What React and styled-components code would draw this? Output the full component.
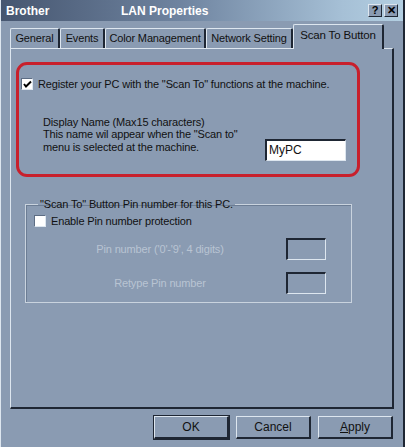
import styled, { createGlobalStyle } from 'styled-components';

const face = '#8a9bb2';
const light = '#dde6ef';
const dark = '#1e2633';
const shade = '#5d6d84';

const GlobalStyle = createGlobalStyle`
  body {
    margin: 0;
    background: ${face};
    font-family: "Liberation Sans", Arial, sans-serif;
  }
`;

const Window = styled.div`
  width: 405px;
  height: 447px;
  box-sizing: border-box;
  background: ${face};
  border-left: 1px solid ${light};
  border-right: 2px solid ${dark};
  display: flex;
  flex-direction: column;
  color: #111;
  font-size: 11px;
  letter-spacing: -0.15px;
`;

const TitleBar = styled.div`
  height: 21px;
  display: flex;
  align-items: center;
  padding: 0 5px 0 5px;
  background: linear-gradient(to right, #465670 0%, #6f84a0 45%, #a6c0d6 85%, #b3cfe2 100%);
  color: #fff;
  font-weight: 700;
  font-size: 12px;
  letter-spacing: 0;
`;

const TitleText = styled.span`
  width: ${(p) => p.w || 'auto'};
  flex: ${(p) => (p.grow ? 1 : 'none')};
`;

const CaptionButton = styled.div`
  width: 14px;
  height: 13px;
  margin-left: 2px;
  box-sizing: border-box;
  background: ${face};
  border-top: 1px solid ${light};
  border-left: 1px solid ${light};
  border-right: 1px solid ${dark};
  border-bottom: 1px solid ${dark};
  color: #000;
  font-size: 11px;
  line-height: 11px;
  text-align: center;
  font-weight: 700;
`;

const TabRow = styled.div`
  display: flex;
  align-items: flex-end;
  height: 27px;
  padding-left: 9px;
  position: relative;
  z-index: 1;
`;

const Tab = styled.div`
  box-sizing: border-box;
  width: ${(p) => p.w}px;
  height: ${(p) => (p.active ? '25px' : '20px')};
  margin-bottom: ${(p) => (p.active ? '-1px' : '0')};
  padding-top: ${(p) => (p.active ? '4px' : '3px')};
  background: ${face};
  border-top: 1px solid ${light};
  border-left: 1px solid ${light};
  border-right: 2px solid ${dark};
  border-radius: 2px 2px 0 0;
  font-size: ${(p) => (p.active ? '11.5px' : '11px')};
  text-align: center;
  white-space: nowrap;
`;

const Panel = styled.div`
  margin: 0 9px 0 9px;
  height: 361px;
  box-sizing: border-box;
  border-top: 1px solid ${light};
  border-left: 1px solid ${light};
  border-right: 2px solid ${dark};
  border-bottom: 2px solid ${dark};
  padding: 13px 0 0 5px;
  display: flex;
  flex-direction: column;
`;

const RedBox = styled.div`
  width: 344px;
  height: 115px;
  box-sizing: border-box;
  border: 3px solid #c8202c;
  border-radius: 11px;
  padding: 13px 0 0 2px;
  display: flex;
  flex-direction: column;
`;

const CheckRow = styled.label`
  display: flex;
  align-items: center;
  gap: 5px;
  margin-top: ${(p) => p.top || '0'};
`;

const Check = styled.span`
  width: 12px;
  height: 12px;
  box-sizing: border-box;
  background: #fff;
  border-top: 1px solid ${shade};
  border-left: 1px solid ${shade};
  border-right: 1px solid ${light};
  border-bottom: 1px solid ${light};
  display: flex;
  align-items: center;
  justify-content: center;
`;

const NameRow = styled.div`
  display: flex;
  align-items: flex-end;
  margin-top: 26px;
  padding-left: 22px;
`;

const NameText = styled.div`
  width: 222px;
  line-height: 12.3px;
  padding-bottom: 8px;
`;

const TextBox = styled.div`
  width: 81px;
  height: 22px;
  box-sizing: border-box;
  background: ${(p) => (p.disabled ? face : '#fff')};
  border-top: 2px solid ${dark};
  border-left: 2px solid ${dark};
  border-right: 1px solid ${light};
  border-bottom: 1px solid ${light};
  padding: 2px 0 0 2px;
  font-size: 12px;
  letter-spacing: 0;
`;

const Group = styled.fieldset`
  margin: 21px 0 0 9px;
  width: 327px;
  height: 105px;
  box-sizing: border-box;
  border: 1px solid #c9d3de;
  box-shadow: inset 1px 1px 0 #6c7d94;
  padding: 0 0 0 8px;
  display: flex;
  flex-direction: column;
`;

const Legend = styled.legend`
  padding: 0 2px;
  margin-left: 4px;
`;

const PinRow = styled.div`
  display: grid;
  grid-template-columns: 252px 40px;
  align-items: center;
  margin-top: ${(p) => p.top || '0'};
  & > div:last-child {
    width: 40px;
  }
`;

const Disabled = styled.span`
  color: #b9c4d2;
  text-align: center;
`;

const Footer = styled.div`
  display: flex;
  justify-content: flex-end;
  gap: 7px;
  padding: 7px 10px 0 0;
`;

const Button = styled.button`
  width: 75px;
  height: 23px;
  box-sizing: border-box;
  background: ${face};
  font-family: "Liberation Sans", Arial, sans-serif;
  font-size: 12px;
  color: #111;
  border-top: 1px solid ${light};
  border-left: 1px solid ${light};
  border-right: 2px solid ${dark};
  border-bottom: 2px solid ${dark};
  outline: ${(p) => (p.primary ? `1px solid ${dark}` : 'none')};
  padding: 0;
`;

const Underline = styled.span`
  text-decoration: underline;
`;

const Tick = () => (
  <svg width="9" height="9" viewBox="0 0 9 9">
    <path d="M1 4 L3 6.5 L8 1.5" stroke="#000" strokeWidth="2" fill="none" />
  </svg>
);

const tabs = [
  ['General', 50],
  ['Events', 45],
  ['Color Management', 101],
  ['Network Setting', 87],
];

export default function App() {
  return (
    <Window>
      <GlobalStyle />
      <TitleBar>
        <TitleText w="115px">Brother</TitleText>
        <TitleText grow>LAN Properties</TitleText>
        <CaptionButton>?</CaptionButton>
        <CaptionButton>✕</CaptionButton>
      </TitleBar>
      <TabRow>
        {tabs.map(([label, w]) => (
          <Tab key={label} w={w}>
            {label}
          </Tab>
        ))}
        <Tab active w={91}>
          Scan To Button
        </Tab>
      </TabRow>
      <Panel>
        <RedBox>
          <CheckRow>
            <Check>
              <Tick />
            </Check>
            Register your PC with the "Scan To" functions at the machine.
          </CheckRow>
          <NameRow>
            <NameText>
              Display Name (Max15 characters)
              <br />
              This name wil appear when the "Scan to"
              <br />
              menu is selected at the machine.
            </NameText>
            <TextBox>MyPC</TextBox>
          </NameRow>
        </RedBox>
        <Group>
          <Legend>"Scan To" Button Pin number for this PC.</Legend>
          <CheckRow top="5px">
            <Check />
            Enable Pin number protection
          </CheckRow>
          <PinRow top="11px">
            <Disabled>Pin number ('0'-'9', 4 digits)</Disabled>
            <TextBox disabled />
          </PinRow>
          <PinRow top="12px">
            <Disabled>Retype Pin number</Disabled>
            <TextBox disabled />
          </PinRow>
        </Group>
      </Panel>
      <Footer>
        <Button primary>OK</Button>
        <Button>Cancel</Button>
        <Button>
          <Underline>A</Underline>pply
        </Button>
      </Footer>
    </Window>
  );
}
